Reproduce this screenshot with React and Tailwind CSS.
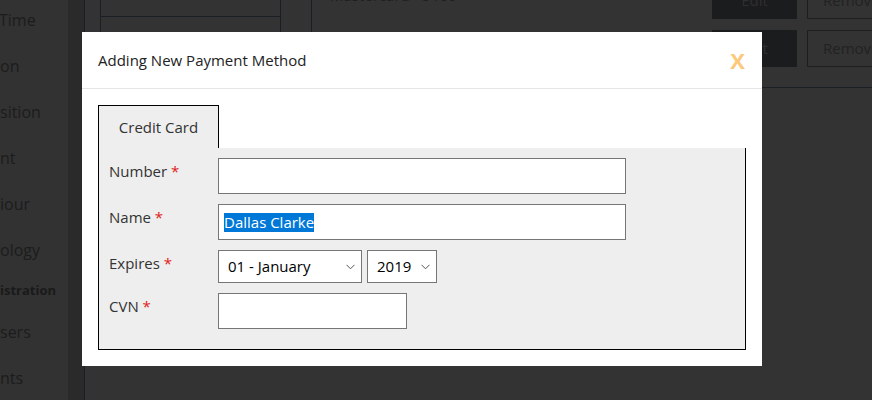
import { useState } from 'react'

const font = { fontFamily: '"Open Sans", "Noto Sans", sans-serif' }

const sideItems = [
  { label: 'Time', kind: 'item' },
  { label: 'on', kind: 'item' },
  { label: 'sition', kind: 'item' },
  { label: 'nt', kind: 'item' },
  { label: 'iour', kind: 'item' },
  { label: 'ology', kind: 'item' },
  { label: 'istration', kind: 'head' },
  { label: 'sers', kind: 'item' },
  { label: 'nts', kind: 'item' },
]

const months = ['01 - January', '02 - February', '03 - March', '04 - April', '05 - May', '06 - June']
const years = ['2019', '2020', '2021', '2022', '2023']

function Chevron() {
  return (
    <svg width="9" height="6" viewBox="0 0 9 6" className="pointer-events-none absolute top-1/2 right-[7px] -translate-y-1/2">
      <polyline points="0.5,0.8 4.5,4.8 8.5,0.8" fill="none" stroke="#555" strokeWidth="1" />
    </svg>
  )
}

function Field({ label, children }) {
  return (
    <div className="flex items-start">
      <label className="w-[119px] shrink-0 pt-[2px] pl-[10px] text-[15px] leading-[22px] text-[#333]">
        {label} <span className="text-[#e02020]">*</span>
      </label>
      {children}
    </div>
  )
}

function Background() {
  return (
    <div className="flex h-[400px] w-[872px] bg-[#333333]">
      {/* sidebar, scrolled off to the left */}
      <div className="w-[68px] shrink-0 overflow-hidden bg-[#323232]">
        <div className="-mt-[3px] flex flex-col">
          {sideItems.map((it, i) =>
            it.kind === 'head' ? (
              <div key={i} className="flex h-[36px] items-center whitespace-nowrap text-[13px] font-bold text-[#1a1a1a]">
                {it.label}
              </div>
            ) : (
              <div key={i} className={`flex h-[46px] items-center whitespace-nowrap text-[16px] text-[#1c1c1c] ${i === 0 ? '-ml-[1px]' : ''}`}>
                {it.label}
              </div>
            )
          )}
        </div>
      </div>
      <div className="w-[16px] shrink-0 bg-[#2a2a2a]" />

      <div className="flex min-w-0 flex-1 border-l border-[#1a1f25] pl-[15px]">
        <div className="w-[181px] shrink-0 self-start border-x border-[#1a1f25]">
          <div className="h-[17px] border-b border-[#1a1f25]" />
          <div className="h-[90px]" />
        </div>
        <div className="ml-[30px] flex min-w-0 flex-1 flex-col self-start border-l border-[#1a1f25]">
          <div className="flex items-start border-b border-[#1a1f25] pb-[20px] pl-[18px]">
            <div className="-mt-[16px] min-w-0 flex-1 text-[15px] text-[#1f1f1f]">Mastercard - 5100</div>
            <div className="-mt-[18px] -mr-[25px] flex shrink-0 flex-col gap-[11px]">
              {[0, 1].map(r => (
                <div key={r} className="flex gap-[10px]">
                  <button className="flex h-[37px] w-[85px] items-center justify-center bg-[#1b1c1e] text-[15px] text-[#2f2f2f]">
                    Edit
                  </button>
                  <button className="flex h-[37px] w-[90px] items-center justify-start border border-[#1e1e1e] pl-[15px] text-[15px] text-[#222]">
                    Remove
                  </button>
                </div>
              ))}
            </div>
          </div>
        </div>
      </div>
    </div>
  )
}

export default function App() {
  const [month, setMonth] = useState(months[0])
  const [year, setYear] = useState(years[0])

  return (
    <div className="relative h-[400px] w-[872px] overflow-hidden" style={font}>
      <Background />

      {/* modal */}
      <div className="absolute top-[32px] left-[82px] flex h-[334px] w-[680px] flex-col bg-white">
        <div className="flex h-[57px] shrink-0 items-center justify-between border-b border-[#e5e5e5] pr-[17px] pl-[16px]">
          <h2 className="text-[15px] text-[#222]">Adding New Payment Method</h2>
          <button className="text-[22px] leading-none font-bold text-[#fcc97b]">X</button>
        </div>

        <div className="flex flex-1 flex-col px-4 pt-4 pb-4">
          <div className="flex">
            <div className="flex h-[43px] w-[121px] items-center justify-center border-x border-t border-black bg-[#eeeeee] text-[15px] text-[#333]">
              Credit Card
            </div>
          </div>
          <div className="flex flex-1 flex-col gap-[10px] border-x border-b border-black bg-[#eeeeee] pt-[10px]">
            <Field label="Number">
              <input className="h-[36px] w-[408px] border border-[#767676] bg-white px-[6px] text-[15px] outline-none" />
            </Field>
            <Field label="Name">
              <div className="flex h-[36px] w-[408px] items-center border border-[#767676] bg-white pl-[5px] text-[15px]">
                <span className="bg-[#0078d7] leading-[19px] text-white">Dallas Clarke</span>
              </div>
            </Field>
            <Field label="Expires">
              <div className="flex gap-[5px]">
                <div className="relative">
                  <select
                    value={month}
                    onChange={e => setMonth(e.target.value)}
                    className="h-[33px] w-[144px] appearance-none border border-[#767676] bg-white pl-[9px] text-[15px] text-black outline-none"
                  >
                    {months.map(m => (
                      <option key={m}>{m}</option>
                    ))}
                  </select>
                  <Chevron />
                </div>
                <div className="relative">
                  <select
                    value={year}
                    onChange={e => setYear(e.target.value)}
                    className="h-[33px] w-[70px] appearance-none border border-[#767676] bg-white pl-[9px] text-[15px] text-black outline-none"
                  >
                    {years.map(y => (
                      <option key={y}>{y}</option>
                    ))}
                  </select>
                  <Chevron />
                </div>
              </div>
            </Field>
            <Field label="CVN">
              <input className="h-[36px] w-[189px] border border-[#767676] bg-white px-[6px] text-[15px] outline-none" />
            </Field>
          </div>
        </div>
      </div>
    </div>
  )
}
